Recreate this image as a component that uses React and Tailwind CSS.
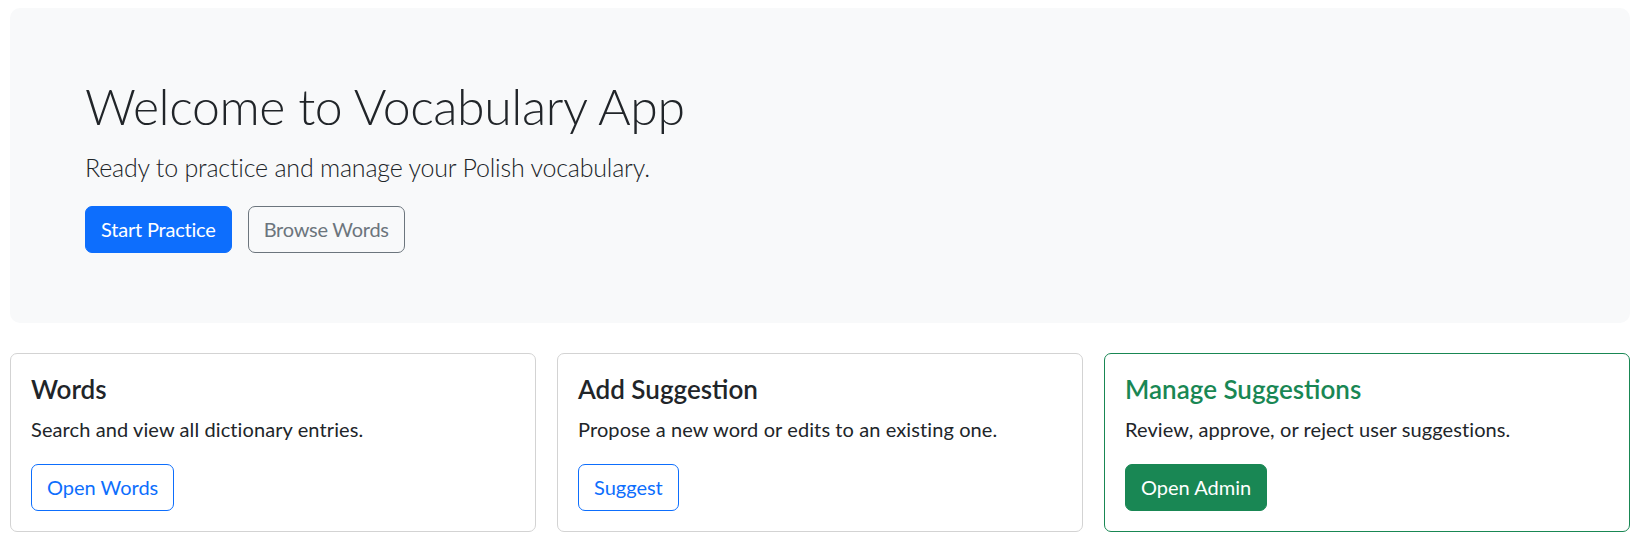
import React from "react";

function Card({ title, text, button, variant }) {
  const success = variant === "success";
  return (
    <div
      className={
        "rounded-[7px] border bg-white px-[20px] pt-[20px] pb-[20px] " +
        (success ? "border-[#198754]" : "border-[#d3d3d3]")
      }
    >
      <h5
        className={
          "mb-[10px] text-[26px] leading-[30px] font-semibold " +
          (success ? "text-[#198754]" : "text-[#212529]")
        }
      >
        {title}
      </h5>
      <p className="mb-[20px] text-[20px] leading-[30px] tracking-[0.1px] text-[#212529]">{text}</p>
      {success ? (
        <button className="flex h-[47px] items-center rounded-[7px] border border-[#198754] bg-[#198754] px-[15px] text-[20px] text-white">
          {button}
        </button>
      ) : (
        <button className="flex h-[47px] items-center rounded-[7px] border border-[#0d6efd] bg-white px-[15px] text-[20px] text-[#0d6efd]">
          {button}
        </button>
      )}
    </div>
  );
}

export default function App() {
  return (
    <div
      className="min-h-[550px] bg-white pt-[8px] pl-[10px] pr-[13px]"
      style={{ fontFamily: "Lato, 'Open Sans', sans-serif" }}
    >
      <div className="rounded-[10px] bg-[#f8f9fa] px-[75px] pt-[68px] pb-[70px]">
        <h1 className="mb-[13px] text-[50px] leading-[60px] font-light tracking-[-0.4px] text-[#212529]">
          Welcome to Vocabulary App
        </h1>
        <p className="mb-[19px] text-[25px] leading-[37.5px] font-light tracking-[-0.2px] text-[#212529]">
          Ready to practice and manage your Polish vocabulary.
        </p>
        <div className="flex gap-[16px]">
          <button className="flex h-[47px] items-center rounded-[7px] border border-[#0d6efd] bg-[#0d6efd] px-[15px] text-[20px] tracking-[-0.2px] text-white">
            Start Practice
          </button>
          <button className="flex h-[47px] items-center rounded-[7px] border border-[#6c757d] bg-transparent px-[15px] text-[20px] tracking-[-0.25px] text-[#6c757d]">
            Browse Words
          </button>
        </div>
      </div>
      <div className="mt-[30px] grid grid-cols-3 gap-[21px]">
        <Card title="Words" text="Search and view all dictionary entries." button="Open Words" />
        <Card
          title="Add Suggestion"
          text="Propose a new word or edits to an existing one."
          button="Suggest"
        />
        <Card
          title="Manage Suggestions"
          text="Review, approve, or reject user suggestions."
          button="Open Admin"
          variant="success"
        />
      </div>
    </div>
  );
}
